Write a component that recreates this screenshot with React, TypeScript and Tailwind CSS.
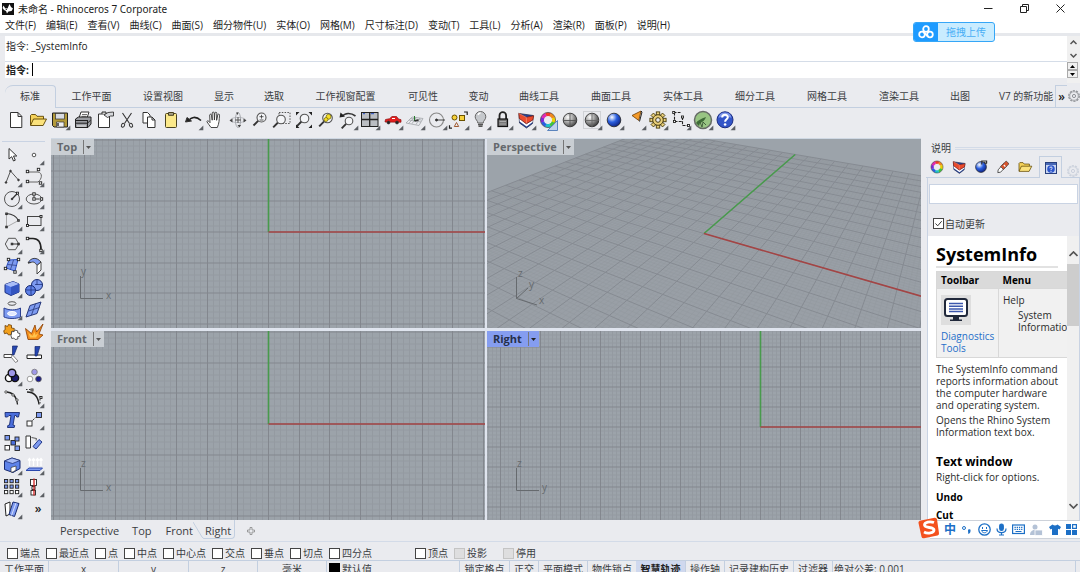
import React from "react";

type Glyph = { name: string; art: React.ReactNode; more?: boolean };

const K = "#333";
const B = "#2b4fc4";
const L = "#7d9af0";

const dot = (x: number, y: number, r = 1.2) => (
  <rect key={`${x}-${y}`} x={x - r} y={y - r} width={r * 2} height={r * 2} fill="#fff" stroke="#222" strokeWidth=".9" />
);
const sq = (x: number, y: number, fill: string, s = 4.5) => (
  <rect key={`s${x}-${y}`} x={x} y={y} width={s} height={s} fill={fill} stroke="#222" strokeWidth=".9" />
);

function Icon({ glyph, className }: { glyph: Glyph; className?: string }) {
  return (
    <button type="button" aria-label={glyph.name} className={className ?? "flex items-center justify-center"}>
      <svg width="22" height="22" viewBox="0 0 22 22" fill="none" stroke={K} className="shrink-0">
        {glyph.art}
        {glyph.more && <path d="M21.3 16.6v4.7h-4.7z" fill="#5c5f64" stroke="none" />}
      </svg>
    </button>
  );
}

const sphere = (a: string, b: string, id: string) => (
  <>
    <defs>
      <radialGradient id={id} cx=".35" cy=".3" r=".8">
        <stop offset="0" stopColor="#fff" />
        <stop offset=".45" stopColor={a} />
        <stop offset="1" stopColor={b} />
      </radialGradient>
    </defs>
    <circle cx="11" cy="11" r="6.8" fill={`url(#${id})`} stroke="#222" strokeWidth=".8" />
  </>
);

const wheel = (r: number, w: number) =>
  ["#f03a2a", "#f08a1c", "#ecd000", "#40c43a", "#20c0c8", "#2a5ce0", "#7a2ad8", "#e02ab0"].map((c, i) => {
    const a = ((i - 2.5) * Math.PI) / 4;
    const b = a + Math.PI / 4 + 0.04;
    return (
      <path
        key={c}
        d={`M${11 + r * Math.cos(a)} ${11 + r * Math.sin(a)}A${r} ${r} 0 0 1 ${11 + r * Math.cos(b)} ${11 + r * Math.sin(b)}`}
        stroke={c}
        strokeWidth={w}
      />
    );
  });

const layers = (
  <>
    <path d="M4 4.500l.5 9.500 7 5 6-4.500.8-8z" fill="#25439c" stroke="#1a2140" strokeWidth=".7" />
    <path d="M4.500 9.500l7 5.500 6.300-4-.2 2-6 4.500-7-5z" fill="#fff" stroke="none" />
    <path d="M3.800 4.200l7.500 4 7.400-1.400-.9 4.200-6.500 3.800-7-5.300z" fill="#ea4a2c" stroke="#7a2015" strokeWidth=".7" />
    <path d="M4 4.500l7.300 3.900.2 6" stroke="#f7a08a" strokeWidth=".6" />
  </>
);

const folder = (
  <>
    <path d="M3.500 16V6.500l1-1h4l1.500 1.800h6.500V10" fill="#f5d25a" stroke="#5b4300" strokeWidth=".9" />
    <path d="M3.500 16.500l3-6.500h13l-3.400 6.500z" fill="#fbe27c" stroke="#5b4300" strokeWidth=".9" />
  </>
);

const lens = (x: number, y: number, r: number, fill = "#f4f5f8") => (
  <>
    <path d={`M${x - r * 0.7} ${y + r * 0.7}L${x - r - 3.5} ${y + r + 3.5}`} strokeWidth="1.9" stroke="#333" />
    <circle cx={x} cy={y} r={r} fill={fill} stroke="#555" strokeWidth="1.1" />
  </>
);

const gearArt = (c: string, fill: string) =>
  Array.from({ length: 8 }, (_, i) => (
    <rect key={i} x="9.3" y="2.9" width="3.4" height="4" fill={fill} stroke={c} strokeWidth=".9" transform={`rotate(${i * 45} 11 11)`} />
  ));

const outlineGear = (c: string) => (
  <svg width="12" height="12" viewBox="0 0 12 12" fill="none" stroke={c}>
    <circle cx="6" cy="6" r="5.300" strokeDasharray="2.200 1.100" strokeWidth="1.100" />
    <circle cx="6" cy="6" r="4.300" strokeWidth=".7" />
    <circle cx="6" cy="6" r="1.600" strokeWidth=".9" />
  </svg>
);

const standardTools: Glyph[] = [
  { name: "新建", art: <path d="M5.5 3.5h7.5l3.8 3.8V18.5H5.5zM13 3.5v4h3.8" fill="#fff" strokeWidth="1" /> },
  { name: "打开", art: folder },
  { name: "保存", more: true, art: (
    <>
      <path d="M3.5 4h15v14h-13.500l-1.500-1.500z" fill="#b39a3a" stroke="#222" />
      <rect x="6.500" y="4.500" width="9" height="5.500" fill="#d9dce2" strokeWidth=".7" />
      <path d="M7.500 18v-5h7.500v5z" fill="#eee" strokeWidth=".7" /><path d="M9 14v3" strokeWidth="1.500" />
    </>) },
  { name: "打印", art: (
    <>
      <path d="M7 9l2-6h8l-2 6z" fill="#fff" /><path d="M10 5.500h5M9.500 7.300h5" strokeWidth=".7" />
      <path d="M3.500 10l3-2h12.500v7l-3 3.500H3.500z" fill="#9a9ca1" stroke="#222" />
      <path d="M4 11.500h11.500M4 14.200h11.500l3-3M15.500 11v7" stroke="#222" /><path d="M5 17h9" stroke="#eee" />
    </>) },
  { name: "属性", art: (
    <>
      <path d="M4.500 5h11v13.500h-11z" fill="#fff" /><path d="M8 5V3h4v2" fill="#ccc" />
      <path d="M10 6l4-2.500 5.500-.5v4h-3l-3 1.500z" fill="#d7d9dd" stroke="#222" strokeWidth=".8" />
    </>) },
  { name: "剪切", art: (
    <>
      <path d="M6.500 4l7 10.500M15.500 4l-7 10.500" strokeWidth="1.100" />
      <ellipse cx="7" cy="16.300" rx="1.500" ry="2" transform="rotate(30 7 16.300)" />
      <ellipse cx="15" cy="16.300" rx="1.500" ry="2" transform="rotate(-30 15 16.300)" />
    </>) },
  { name: "复制", art: <><path d="M5 3.500h4.500l2.500 2.500v8H5z" fill="#fff" /><path d="M9.500 8h4.500l3 3v7.500H9.500zM14 8v3h3" fill="#fff" /></> },
  { name: "粘贴", art: <><rect x="5.500" y="4.500" width="11" height="14" rx="1" fill="#fbe98a" stroke="#4a4320" /><path d="M8.500 6.300V3.500h5v2.800z" fill="#a8a28a" stroke="#4a4320" /></> },
  { name: "复原", more: true, art: <><path d="M6 12.500c3-5 8-5.500 13-1" strokeWidth="1.600" stroke="#222" /><path d="M3.500 13l1.500-4.500 4.500 3.500z" fill="#222" /></> },
  { name: "平移", art: <path d="M7 18.500c-1.500-2.200-3-4-4.200-6 .8-1.200 2-.5 3.200 1.200L5.700 6c.2-1.200 1.700-1 1.800.2l.7 5V4c.2-1.300 1.900-1.200 2 0l.2 7 .5-7c.2-1.200 1.900-1 1.900.3l-.2 7 1.200-5.500c.3-1.200 1.900-.8 1.700.4-.3 4.300-.3 8.300-2.200 12.300z" fill="#fff" strokeWidth=".9" /> },
  { name: "旋转视图", art: (
    <>
      <ellipse cx="11" cy="11" rx="7.500" ry="2.600" stroke="#b4b7bc" strokeWidth=".9" /><ellipse cx="11" cy="11" rx="2.600" ry="7.500" stroke="#a0a3a8" strokeWidth=".9" />
      <path d="M11 8v6M8 11h6" stroke="#555" />
      <path d="M2.500 11.500l3-2v4zM19.500 11.500l-3-2v4zM12.500 18.500l-2-2.500h3.500zM9 3.500l2.500 0-1 2.500z" fill="#444" stroke="none" />
    </>) },
  { name: "缩放", art: <>{lens(12.5, 8.500, 4.500)}<path d="M10.500 7.700h4M12.500 5.800v3.800M10.500 11h4" strokeWidth=".8" /></> },
  { name: "框选缩放", art: <><rect x="8" y="3.500" width="11" height="11" strokeDasharray="1.500 1.300" stroke="#555" />{lens(10, 10.500, 4.300)}</> },
  { name: "缩放至最大范围", art: (
    <>{lens(11.5, 9.500, 4.300)}<path d="M3 6.500V3h3.500zM15.500 3H19v3.500zM19 15.500V19h-3.500zM3 15.500V19h3.500z" fill="#222" stroke="none" /></>) },
  { name: "缩放选取物件", art: <>{lens(12.500, 9, 4.800)}<circle cx="13.500" cy="7.800" r="2.500" fill="#f5de2a" stroke="#6b6200" strokeWidth=".7" /><circle cx="11" cy="10.500" r="2" fill="#f5de2a" stroke="#6b6200" strokeWidth=".7" /></> },
  { name: "复原视图", more: true, art: <>{lens(12, 12, 3.800)}<path d="M5 7.500c3-4 9-4 13.500-.5" strokeWidth="1.600" /><path d="M2.500 8.500l1-5 4.500 4z" fill="#222" stroke="none" /></> },
  { name: "四个工作视窗", more: true, art: <><rect x="2.500" y="3.500" width="16.500" height="14" fill="#babdc2" stroke="#222" /><path d="M10.700 3.500v14M2.500 10.500H19" stroke="#222" strokeWidth="1.300" /><path d="M4 4.700h2M12 4.700h3" stroke={B} /></> },
  { name: "着色", more: true, art: (
    <>
      <path d="M3 13l.5-2.500 4-.8 2.500-2.200h4.500l2 2.500 2.500.7v2.500z" fill="#e31f1f" stroke="#8c0e0e" strokeWidth=".7" />
      <circle cx="6.500" cy="13.500" r="1.500" fill="#222" strokeWidth=".6" /><circle cx="15" cy="13.500" r="1.500" fill="#222" strokeWidth=".6" /><path d="M10 9.500h3" stroke="#fff" />
    </>) },
  { name: "工作平面", more: true, art: (
    <>
      <path d="M2 14l6-6 11 1.500-4 7zM5 11l12 2M6.500 9.500l11 1.500M8 14.700L12 8.500M4.500 14.500l6-6.200M12 15.500l4-6.500" stroke="#9a9da2" strokeWidth=".7" />
      <path d="M10.500 12V7" stroke="#257a2b" /><path d="M10.500 12l4-1" stroke="#333" strokeWidth="1.300" />
    </>) },
  { name: "圆", more: true, art: <><circle cx="10.500" cy="11" r="7" stroke="#888" strokeWidth="1.100" /><path d="M11 11h8" strokeWidth=".9" /><circle cx="10.500" cy="11" r="1" fill="#222" /></> },
  { name: "选取", more: true, art: (
    <>
      <circle cx="6.500" cy="8.500" r="2.500" fill="#f7d23a" stroke="#6b5200" /><rect x="11.500" y="6.500" width="5" height="5" fill="#f7d23a" stroke="#6b5200" />
      <path d="M8.500 13.500l2.200 4H6.300z" stroke="#a05a30" /><path d="M16 3h3.200v3M4 19.200H1.500v-3" stroke="#222" strokeWidth="1.200" />
    </>) },
  { name: "隐藏物件", more: true, art: (
    <>
      <path d="M7.800 14c0-2.500-2.600-3.200-2.600-6.200a5.300 5.300 0 0 1 10.600 0c0 3-2.600 3.700-2.600 6.200z" fill="#c5c8cc" stroke="#666" />
      <path d="M8 15.500h5M8.500 17.200h4" strokeWidth="1.500" stroke="#555" /><path d="M8 6c.5-1.500 1.500-2 2.500-2" stroke="#fff" strokeWidth="1.300" />
    </>) },
  { name: "锁定物件", more: true, art: <><path d="M7.500 10V6.500a3.300 3.300 0 0 1 6.600 0V10" strokeWidth="1.800" stroke="#222" /><rect x="6" y="10" width="9.500" height="7.500" fill="#777" stroke="#111" strokeWidth="1.200" /><path d="M7.500 12.500h6.500M7.500 15h6.500" stroke="#aaa" /></> },
  { name: "图层", more: true, art: layers },
  { name: "物件属性", more: false, art: <>{wheel(5.8, 3.4)}<circle cx="11" cy="11" r="7.600" stroke="#333" strokeWidth=".6" /><path d="M20.500 11.500v10h-10z" fill="#b7cdea" fillOpacity=".85" stroke="#5b84bd" /></> },
  { name: "着色模式", art: <>{sphere("#aaa", "#333", "sp1")}<path d="M11 4.300v13.500M4.300 11.500h13.500" stroke="#555" strokeWidth=".9" /></> },
  { name: "渲染模式", more: true, art: <><rect x="2.500" y="2.500" width="17" height="17" stroke="#b4b6ba" strokeDasharray="1 1" />{sphere("#999", "#2a2a2a", "sp2")}<path d="M11 4.300v13.500M4.300 11.500h13.500" stroke="#666" strokeWidth=".9" /></> },
  { name: "渲染", more: true, art: sphere("#2a5fe0", "#0a1870", "sp3") },
  { name: "灯光", more: true, art: <><path d="M7 6.500l9-4.500-2.200 9.500z" fill="#f39a2a" stroke="#6b3a00" strokeWidth=".8" /><path d="M16 2l1 1-2.500 9.500" stroke="#222" /></> },
  { name: "选项", more: true, art: <>{gearArt("#473c10", "#e9cf7a")}<circle cx="11" cy="11" r="5.300" fill="#e9cf7a" stroke="#473c10" /><circle cx="11" cy="11" r="2.300" fill="#eaebef" stroke="#473c10" /></> },
  { name: "尺寸标注", more: true, art: <><path d="M3.500 3.500h7M4.500 3.500v9M4.500 12.500h7.500M12.500 8v8.500M12.500 16.500h6" stroke="#222" strokeDasharray="3 1.200" strokeWidth="1.100" />{dot(3.700, 3.500, 1)}{dot(4.500, 12.500, 1)}{dot(12.500, 8, 1)}{dot(18.500, 16.500, 1)}</> },
  { name: "Grasshopper", more: true, art: <><circle cx="11" cy="11" r="8.500" fill="#98c583" stroke="#666b66" strokeWidth="1.500" /><path d="M4 14c2-3 5-4 10-6-1 3-3 5-6 6l-1 3z" fill="#3e6b38" stroke="none" /><path d="M8 13l2 5 1-5 3 3" stroke="#304c2d" strokeWidth=".8" /></> },
  { name: "说明", more: true, art: <><circle cx="11" cy="10.800" r="8" fill="#3355c8" stroke="#1b2c80" /><path d="M4.500 9a6.600 6.600 0 0 1 13 0c-4-2-9-2-13 0z" fill="#7d96ea" stroke="none" /><path d="M8.200 8.500c0-3.700 5.800-3.500 5.600-.2-.2 2-2.700 2-2.700 4.500" stroke="#fff" strokeWidth="2" /><circle cx="11.100" cy="15.500" r="1.300" fill="#fff" stroke="none" /></> },
];

const modelTools: Glyph[] = [
  { name: "选取物件", art: <path d="M8 4.500v10.500l2.700-2.300 1.800 4.300 1.800-.8-1.800-4.200h3.300z" fill="#fff" strokeWidth="1" /> },
  { name: "单点", more: true, art: <circle cx="11" cy="11" r="1.800" fill="#fff" stroke="#555" /> },
  { name: "多重直线", more: true, art: <><path d="M5 16.500L9.500 5l8 9" stroke="#555" /><circle cx="5" cy="16.500" r=".8" fill={K} /><circle cx="9.500" cy="5" r=".8" fill={K} /><circle cx="17.500" cy="14" r=".8" fill={K} /></> },
  { name: "曲线", more: true, art: <><path d="M5 6h10c5 1 4 7 0 10H5" stroke="#666" />{dot(4.500, 5.500)}{dot(15.500, 3.500)}{dot(4.500, 15.500)}{dot(17.500, 17)}</> },
  { name: "圆", more: true, art: <><circle cx="11" cy="11" r="7.500" stroke="#555" /><path d="M11 11l5.300-5.500" strokeWidth="1.300" />{dot(16.500, 5.200, 1)}<circle cx="11" cy="11" r=".8" fill={K} /></> },
  { name: "椭圆", more: true, art: <><ellipse cx="11" cy="11" rx="7.800" ry="5" stroke="#555" />{dot(11, 6)}{dot(11, 11)}{dot(18.500, 11)}<path d="M11 7.500v2M12.500 11h4" /></> },
  { name: "圆弧", more: true, art: <><path d="M5.500 3.500v13.500l12-6.500" stroke="#999" strokeWidth=".8" /><path d="M5.500 3.500c6 .5 10 3 12 7" strokeWidth="1.200" />{dot(5.500, 3.800, .8)}{dot(5.500, 17, .8)}{dot(17.500, 10.500, .8)}</> },
  { name: "矩形", more: true, art: <><rect x="4.500" y="6.500" width="13.500" height="9" stroke="#444" />{dot(4.500, 15.500, 1)}{dot(18, 6.500, 1)}</> },
  { name: "多边形", more: true, art: <><path d="M7.500 5.300h7l3.300 5.700-3.300 5.700h-7L4.300 11z" stroke="#555" /><path d="M11 11h6.500" />{dot(11, 11, .8)}{dot(17.500, 11, .8)}</> },
  { name: "曲线圆角", more: true, art: <><path d="M5 5.500h5c5 0 8 3 8 11" stroke="#222" strokeWidth="1.700" />{dot(4.500, 5.500)}{dot(18, 17.500)}</> },
  { name: "曲面", more: true, art: <><path d="M8 5l9-.5-3 11.500-9-3z" fill={L} stroke={B} /><path d="M12.500 5l-3 9.500M6.500 9.500l9.500 1" stroke="#26377a" strokeWidth=".7" />{dot(7.500, 4.500)}{dot(17.500, 4.500)}{dot(4.500, 13.500)}{dot(14, 17)}</> },
  { name: "放样", more: true, art: <><path d="M5 8c3-6 9-6 13-1l-4 3.500c-2-3.500-4-4-6-3z" fill={L} stroke={K} strokeWidth=".9" /><path d="M5 8l3-.7" strokeWidth=".9" /><path d="M14 10.500l4-3.500v8l-4 4z" fill="#fff" strokeWidth=".9" /></> },
  { name: "立方体", more: true, art: <><path d="M4 7.500l8-3 6 2.500v8l-8 3.500-6-3z" fill="#4b70e0" stroke="#1b2f80" /><path d="M4 7.500l6 2.500 8-3-6-2.500z" fill="#a8bcf7" stroke="none" /><path d="M10 10v8.500l8-3.500V7z" fill="#3354c0" stroke="none" /></> },
  { name: "球体", more: true, art: <><circle cx="14" cy="8" r="5.500" fill={L} stroke="#172a70" /><circle cx="7.500" cy="13.500" r="5" fill="#5f82ea" stroke="#172a70" /><path d="M2.800 13h9.500M8 8.500v10M14 3v5M12 7.500h7" stroke="#172a70" strokeWidth=".7" /></> },
  { name: "挤出", more: true, art: <><ellipse cx="11" cy="4.500" rx="4" ry="1.800" stroke="#555" /><path d="M3 9c5 2.500 12 2.500 16.500 0v9c-5 2-12 2-16.500 0z" fill={L} stroke="#2b3f90" /><ellipse cx="11" cy="14.500" rx="4.500" ry="2" fill="#dfe7ff" stroke="#fff" /></> },
  { name: "网格", more: true, art: <><path d="M7 6.500l11-3.500-4 11.500L3 18z" fill={L} stroke="#26377a" /><path d="M12.500 4.700L8.500 16M5.500 12l11-3.500" stroke="#26377a" strokeWidth=".8" /></> },
  { name: "组合", art: <><path d="M4 4.500l2.500 1 1-2 3 .8v2.700l2.800.5-.3 3-2.500.3.300 2.700-3.300.5-1.500-2-2.500.7-.8-3 1.500-1z" fill="#f2a01c" stroke="#6b3a00" strokeWidth=".8" /><path d="M11 10l2 .8 1-1.800 2.600.8.200 2.200 2.200.5-.3 2.800-2 .4.200 2.300-2.800.5-1.300-1.500-2 .5-.8-2.800z" fill="#fff" strokeWidth=".8" /></> },
  { name: "炸开", art: <><path d="M5 18.500L2.500 7.500l6 5L12 4l1.500 7L20 3l-4 10 4 1-5 4.500z" fill="#f5901e" stroke="#8a3c00" strokeWidth=".8" /><path d="M7 16.500l-1.500-4.500 4 3 2-4 1 3 3-2-2.500 4.500z" fill="#ffc34d" stroke="none" /></> },
  { name: "修剪", art: <><path d="M3 11.500h8v3H3z" fill="#fff" strokeWidth=".9" /><path d="M11.500 3h5l-3.500 9h-1.500z" fill="#2546b0" stroke="#14266b" strokeWidth=".7" /><path d="M12 12.500l5 5.500-2.500 1.500-4-5" fill="#fff" stroke="#777" strokeWidth=".9" /></> },
  { name: "分割", art: <><path d="M4 12h14.500v3.500H4z" fill="#fff" stroke="#222" /><path d="M12 3.500h5l-3 9.500h-2z" fill="#2546b0" stroke="#14266b" strokeWidth=".7" /></> },
  { name: "群组", more: true, art: <><circle cx="8" cy="13" r="3.600" fill="#fff" stroke="#111" strokeWidth="1.400" /><circle cx="14" cy="13" r="3.600" fill="#1b1b6b" stroke="#111" strokeWidth="1.400" /><circle cx="11" cy="8" r="3.800" fill="#9e97e8" stroke="#111" strokeWidth="1.400" /></> },
  { name: "解散群组", art: <><circle cx="11.500" cy="7" r="2.800" fill="#9e97e8" stroke="#777" strokeWidth=".8" /><circle cx="7" cy="14" r="2.800" fill="#fff" stroke="#888" strokeWidth=".8" /><circle cx="15.500" cy="14" r="2.800" fill="#1b1b8b" stroke="#555" strokeWidth=".8" /></> },
  { name: "显示控制点", art: <><path d="M4.500 5c7 0 11 4 12 12.500" stroke="#222" strokeWidth="1.300" /><circle cx="5" cy="5" r="1.200" fill="#fff" strokeWidth=".8" /><circle cx="12" cy="8" r="1.200" fill="#fff" strokeWidth=".8" /><circle cx="16" cy="13" r="1.200" fill="#fff" strokeWidth=".8" /></> },
  { name: "编辑点", more: true, art: <><path d="M4 5c7 0 11 4 12 12.500" stroke="#222" strokeWidth="1.300" /><path d="M3 2.500h6M17 9v8" strokeDasharray="1.500 1.500" />{dot(9, 3, 1)}{dot(18, 10.500, 1)}</> },
  { name: "文字", art: <path d="M4 3.500h14.500l-1 4.500h-1.800l-.5-1.500h-1.500l-1.700 9.500 1.700.5-.5 2H6.500l.3-2 1.700-.5L10 6.500H8L6.500 8H4.300z" fill="#4a6edc" stroke="#172a70" strokeWidth=".9" /> },
  { name: "移动", more: true, art: <>{sq(4, 12, "#fff", 5)}{sq(13.500, 3.500, L, 5)}<path d="M9.500 11.500l3-3" strokeDasharray="2 1" /></> },
  { name: "阵列复制", art: <>{sq(4, 3.500, L, 4.500)}{sq(10, 8.500, "#4a6edc", 4.500)}{sq(14, 5, L, 4)}{sq(4, 13.500, "#fff", 4.500)}{sq(14, 14, L, 4.500)}</> },
  { name: "旋转", art: <><path d="M3 4h4.500v12H3z" fill="#fff" /><path d="M10 14.500l6-7 3 2.500-6 7z" fill={L} stroke="#22388a" /><path d="M8.500 5.500l5 1-.5 2" stroke="#333" strokeWidth=".8" /></> },
  { name: "布尔运算", more: true, art: <><path d="M3.500 7l7.500-3 8 2.500v8l-7 4-8.500-3z" fill="#5e83ea" stroke="#172a70" /><path d="M3.500 7l8 2.500 7.500-3L11 4z" fill="#a8bcf7" stroke="#172a70" strokeWidth=".7" /><path d="M10 13.500l5-1.500v4l-3 2h-2z" fill="#fff" strokeWidth=".7" /></> },
  { name: "投影", more: true, art: <><path d="M3 16.500h14l2.500-2.500H6z" fill={L} stroke="#2a47ad" /><path d="M6.500 12V5M10.500 12V5M14.500 12V5M18 12V5M5 6.500l1.500-2 1.500 2M9 6.500l1.500-2 1.500 2M13 6.500l1.500-2 1.500 2M16.500 6.500l1.500-2 1.500 2" stroke="#fff" strokeWidth="1.300" /></> },
  { name: "阵列", more: true, art: <>{[3.500, 9, 14.500].map((y) => [3.500, 9, 14.500].map((x) => sq(x, y, y > 14 ? "#fff" : L, 3.200)))}</> },
  { name: "对齐", more: true, art: <>{sq(7.500, 3.500, "#fff", 6)}{sq(9, 10.500, "#fff", 3)}{sq(8, 14.500, "#fff", 4.500)}<path d="M11 2.500v17" stroke="#d02020" strokeWidth="1.300" /></> },
  { name: "弯曲", more: true, art: <><path d="M4 6l5-2v12l-4 2z" fill="#fff" stroke="#222" /><path d="M12 4l6 1.500-4.500 13L8 16.500z" fill={L} stroke="#172a70" /><path d="M15 5l-4.500 12.500" stroke="#d5defc" /></> },
];

const menus = ["文件(F)", "编辑(E)", "查看(V)", "曲线(C)", "曲面(S)", "细分物件(U)", "实体(O)", "网格(M)", "尺寸标注(D)", "变动(T)", "工具(L)", "分析(A)", "渲染(R)", "面板(P)", "说明(H)"];

const toolTabs: [string, string][] = [
  ["工作平面", "w-[71px]"], ["设置视图", "w-[72px]"], ["显示", "w-[50px]"], ["选取", "w-[50px]"],
  ["工作视窗配置", "w-[93px]"], ["可见性", "w-[62px]"], ["变动", "w-[49px]"], ["曲线工具", "w-[72px]"],
  ["曲面工具", "w-[72px]"], ["实体工具", "w-[72px]"], ["细分工具", "w-[72px]"], ["网格工具", "w-[72px]"],
  ["渲染工具", "w-[72px]"], ["出图", "w-[50px]"],
];

const MAJOR = "#83878e";
const MINOR = "#949aa1";
const GREEN = "#489a4c";
const RED = "#a34545";

function PlanGrid({ step, dx = 0, dy = 0 }: { step: number; dx?: number; dy?: number }) {
  const ext = 14 * step * 3;
  const sub = step / 5;
  const lines: React.ReactNode[] = [];
  for (let pass = 0; pass < 2; pass++) {
    for (let i = -210; i <= 210; i++) {
      const major = i % 5 === 0;
      if (major !== (pass === 1)) continue;
      const p = Math.round(i * sub) + 0.5;
      const c = major ? MAJOR : MINOR;
      lines.push(<path key={`${pass}-${i}`} d={`M${p} ${-ext}V${ext}M${-ext} ${p}H${ext}`} stroke={c} strokeWidth="1" />);
    }
  }
  return (
    <svg x="50%" y="50%" overflow="visible">
      <g transform={`translate(${dx} ${dy})`}>
        {lines}
        <path d="M.5 .5V-900" stroke={GREEN} strokeWidth="1.600" />
        <path d="M.5 .5H1800" stroke={RED} strokeWidth="1.600" />
      </g>
    </svg>
  );
}

function project(x: number, y: number): [number, number] {
  const c = Math.cos(Math.PI / 6);
  const u = x * c + y * 0.5;
  const w = y * c - x * 0.5;
  const depth = 1 + w * c;
  return [(396 * u) / depth, (-396 * w * 0.5) / depth];
}

function PerspectiveGrid() {
  const n = 0.704;
  const seg = (x1: number, y1: number, x2: number, y2: number) => {
    const a = project(x1, y1);
    const b = project(x2, y2);
    return `M${a[0].toFixed(1)} ${a[1].toFixed(1)}L${b[0].toFixed(1)} ${b[1].toFixed(1)}`;
  };
  let minor = "";
  let major = "";
  for (let i = -70; i <= 70; i++) {
    const t = (i / 70) * n;
    const d = seg(t, -n, t, n) + seg(-n, t, n, t);
    if (i % 5 === 0) major += d;
    else minor += d;
  }
  const corners = [project(-n, n), project(n, n), project(n, -n), project(-n, -n)];
  return (
    <svg x="50%" y="50%" overflow="visible">
      <polygon points={corners.map((p) => p.join(",")).join(" ")} fill="#999fa6" />
      <path d={minor} stroke="#92989f" strokeWidth=".5" fill="none" />
      <path d={major} stroke="#868b92" strokeWidth="1" fill="none" />
      <path d={seg(0, 0, 0, n)} stroke={GREEN} strokeWidth="1.600" />
      <path d={seg(0, 0, n, 0)} stroke={RED} strokeWidth="1.600" />
    </svg>
  );
}

function Viewport({ name, active, grid, axes }: { name: string; active?: boolean; grid: React.ReactNode; axes: [string, string] | null }) {
  return (
    <section aria-label={name} className="relative min-h-0 min-w-0 overflow-hidden bg-[#9ca3aa]">
      <svg className="absolute inset-0 h-full w-full">
        {grid}
      </svg>
      <svg width="40" height="44" viewBox="0 0 40 44" className="absolute bottom-[22px] left-6" fill="#666a6e" fontFamily="Open Sans" fontSize="10">
        {axes ? (
          <>
            <path d="M5.500 14V36.500H28" fill="none" stroke="#666a6e" />
            <text x="6" y="13">{axes[1]}</text>
            <text x="31" y="37">{axes[0]}</text>
          </>
        ) : (
          <>
            <path d="M5.500 15V36.500L26 43M5.500 36.500L17 26" fill="none" stroke="#666a6e" />
            <text x="7" y="15">z</text>
            <text x="18" y="26">y</text>
            <text x="28" y="42">x</text>
          </>
        )}
      </svg>
      <button
        type="button"
        className={
          active
            ? "relative flex h-4 items-center gap-[6px] bg-[#859df0] pl-[6px] pr-[3px] text-[11px] font-bold text-[#26304a]"
            : "relative flex h-4 items-center gap-[6px] bg-[#c9ced3] pl-[6px] pr-[3px] text-[11px] font-bold text-[#64686c]"
        }
      >
        <span>{name}</span>
        <span className="flex h-[14px] items-center border-l border-[#777] pl-[2px]">
          <svg width="5" height="3" viewBox="0 0 5 3"><path d="M0 0h5L2.500 3z" fill={active ? "#222" : "#555"} /></svg>
        </span>
      </button>
    </section>
  );
}

function Check({ label, off }: { label: string; off?: boolean }) {
  return (
    <label className="flex items-center gap-[2px] whitespace-nowrap">
      <input
        type="checkbox"
        disabled={off}
        className={off ? "m-0 h-[11px] w-[11px] appearance-none border border-[#c4c4c4] bg-[#dededf]" : "m-0 h-[11px] w-[11px] appearance-none border border-[#444] bg-white"}
      />
      {label}
    </label>
  );
}

const small = (node: React.ReactNode) => <svg width="16" height="16" viewBox="1 1 20 20" fill="none" stroke={K}>{node}</svg>;

const panelTabs: [string, React.ReactNode][] = [
  ["属性", small(<>{wheel(5.8, 3.4)}<circle cx="11" cy="11" r="7.600" stroke="#333" strokeWidth=".6" /></>)],
  ["图层", small(layers)],
  ["渲染", small(<>{sphere("#2a5fe0", "#0a1870", "sp4")}<path d="M12 8V3.500h6v3M14.500 5l3.500 2" strokeWidth="1.500" /></>)],
  ["材质", small(<><path d="M5 14.500l7-8 3.500 3-7.500 8-3.500.5z" fill="#fff" /><path d="M8 10.500l7-7 3.500 3.500-7 7z" fill="#d8542c" strokeWidth=".8" /><path d="M12 8.500l2 2" stroke="#fff" strokeWidth="1.500" /></>)],
  ["图库", small(folder)],
];

const tray = "shrink-0 text-[#1c6fc6]";

export default function App() {
  return (
    <div className="relative flex h-screen min-h-[480px] flex-col overflow-hidden bg-[#eaebef] font-['Open_Sans','Noto_Sans_CJK_SC',sans-serif] text-[10px] leading-3 text-[#3a3d42]">
      <header className="shrink-0 bg-white text-[#1d1d1d]">
        <div className="flex h-[17px] items-center justify-between pl-[2px]">
          <h1 className="flex items-center gap-1 font-['Noto_Sans','Noto_Sans_CJK_SC',sans-serif]">
            <svg width="12" height="12" viewBox="0 0 12 12">
              <rect width="12" height="12" fill="#111" />
              <path d="M1.500 2.500l1.500 2.500 2.500.5 2-4.500 1.500 3 2 1.500-1.500 2.500-3 .5-1.500 2-1-2.500-2-1-1.500-2z" fill="#fff" />
              <path d="M3.500 6l1.500.5" stroke="#111" />
            </svg>
            未命名 - Rhinoceros 7 Corporate
          </h1>
          <div className="flex items-center pr-[2px]">
            <button type="button" aria-label="最小化" className="flex w-9 justify-center"><svg width="9" height="9" viewBox="0 0 9 9"><path d="M0 4.500h8.500" stroke="#222" /></svg></button>
            <button type="button" aria-label="还原" className="flex w-9 justify-center"><svg width="9" height="9" viewBox="0 0 9 9" fill="none" stroke="#222"><path d="M.5 2.500h6v6h-6zM2.500 2.500v-2h6v6h-2" /></svg></button>
            <button type="button" aria-label="关闭" className="flex w-9 justify-center"><svg width="9" height="9" viewBox="0 0 9 9"><path d="M.5 .5l8 8M8.500 .5l-8 8" stroke="#222" /></svg></button>
          </div>
        </div>
        <nav className="flex h-4 items-center gap-[10px] whitespace-nowrap pl-[5px]">
          {menus.map((m) => <button key={m} type="button">{m}</button>)}
        </nav>
      </header>

      <section className="flex h-[50px] shrink-0 border-t-[3px] border-[#e6e8ec] pl-[5px]">
        <div className="flex min-w-0 flex-1 flex-col text-[#222]">
          <output className="flex h-[26px] items-start border-b border-[#d5dde8] bg-white pl-[1px] pt-1">指令: _SystemInfo</output>
          <label className="flex h-4 items-center gap-[3px] bg-white pb-px pl-[1px] font-bold">
            指令:
            <input autoComplete="off" className="h-[13px] min-w-0 flex-1 border-l border-black bg-transparent font-normal outline-none" />
          </label>
        </div>
        <div className="flex w-[13px] flex-col bg-[#f0f0f0]">
          <button type="button" aria-label="向上" className="flex h-[13px] items-center justify-center"><svg width="7" height="5" viewBox="0 0 7 5" fill="none"><path d="M.5 4l3-3 3 3" stroke="#555" strokeWidth="1.500" /></svg></button>
          <button type="button" aria-label="向下" className="flex h-[13px] items-center justify-center"><svg width="7" height="5" viewBox="0 0 7 5" fill="none"><path d="M.5 1l3 3 3-3" stroke="#555" strokeWidth="1.500" /></svg></button>
          <button type="button" aria-label="上一个" className="flex h-2 w-[11px] items-center justify-center border border-[#aaa]"><svg width="5" height="3" viewBox="0 0 5 3"><path d="M0 3h5L2.500 0z" /></svg></button>
          <button type="button" aria-label="下一个" className="flex h-2 w-[11px] items-center justify-center border border-[#aaa]"><svg width="5" height="3" viewBox="0 0 5 3"><path d="M0 0h5L2.500 3z" /></svg></button>
        </div>
      </section>

      <section className="flex shrink-0 flex-col pt-[2px]">
        <div className="flex h-[23px] items-stretch pl-[5px]">
          <button type="button" className="w-[51px] shrink-0 rounded-tl-lg rounded-tr-sm border-r border-t border-[#c3cfe0] pb-[2px]">标准</button>
          <div className="flex min-w-0 flex-1 overflow-hidden whitespace-nowrap border-b border-[#c3cfe0]">
            {toolTabs.map(([t, w]) => <button key={t} type="button" className={`shrink-0 ${w}`}>{t}</button>)}
            <button type="button" className="shrink-0 pl-[14px]">V7 的新功能</button>
          </div>
          <button type="button" aria-label="更多" className="w-3 shrink-0 border-b border-l border-t border-[#c3cfe0] text-xs font-semibold leading-none text-[#222]">»</button>
          <button type="button" aria-label="设置" className="flex w-[13px] shrink-0 items-center justify-center border-b border-[#c3cfe0]">{outlineGear("#85888d")}</button>
        </div>
        <div className="grid h-[30px] max-w-[736px] grid-cols-[repeat(33,minmax(0,1fr))] items-start pl-[5px] pt-px">
          {standardTools.map((g) => <Icon key={g.name} glyph={g} />)}
        </div>
      </section>

      <main className="flex min-h-0 flex-1">
        <aside className="flex w-[51px] shrink-0 flex-col pr-[6px] pt-[3px]">
          <div className="ml-[2px] h-[3px] shrink-0 border-t border-[#c9d3e3]" />
          <div className="ml-px grid min-h-0 flex-1 grid-cols-2 grid-rows-[repeat(17,minmax(0,1fr))]">
            {modelTools.map((g) => <Icon key={g.name} glyph={g} />)}
            <button type="button" aria-label="更多工具" className="pl-2 text-xs font-semibold leading-none text-[#222]">»</button>
          </div>
        </aside>

        <div className="grid min-w-0 flex-1 grid-cols-2 grid-rows-2 gap-x-[2px] gap-y-[3px] border-t border-[#cfd8e3] bg-[#dfe4ee]">
          <Viewport name="Top" axes={["x", "y"]} grid={<PlanGrid step={30.7} dy={-2} />} />
          <Viewport name="Perspective" axes={null} grid={<PerspectiveGrid />} />
          <Viewport name="Front" axes={["x", "z"]} grid={<PlanGrid step={30.7} dy={-2} />} />
          <Viewport name="Right" active axes={["y", "z"]} grid={<PlanGrid step={20} dx={56} dy={1} />} />
        </div>

        <aside className="flex w-[159px] shrink-0 flex-col pl-[5px]">
          <div className="flex h-[18px] shrink-0 items-center gap-1 pl-[5px] pt-[2px]">
            <h2>说明</h2>
            <div className="h-[3px] flex-1 border-y border-[#d3dbe8]" />
          </div>
          <div className="flex h-[22px] shrink-0">
            {panelTabs.map(([n, art]) => (
              <button key={n} type="button" aria-label={n} className="flex w-[22px] shrink-0 items-center justify-center border-b border-[#c3cfe0]">{art}</button>
            ))}
            <div className="w-[3px] shrink-0 border-b border-[#c3cfe0]" />
            <button type="button" aria-label="说明" className="flex w-[23px] shrink-0 items-center justify-center border-x border-t border-[#c3cfe0]">
              <svg width="12" height="12" viewBox="0 0 12 12"><rect x=".5" y=".5" width="11" height="11" fill="#c9d6f2" stroke="#29417e" /><rect x="1" y="1" width="10" height="2" fill="#4767b5" /><circle cx="6" cy="7" r="3.800" fill="#2d56cc" /><path d="M4.800 6.200c0-1.600 2.600-1.500 2.400 0-.2.800-1.200.8-1.200 2M6 9v.8" stroke="#fff" fill="none" /></svg>
            </button>
            <button type="button" aria-label="面板选项" className="flex flex-1 items-end justify-end border-b border-[#c3cfe0] pr-px">{outlineGear("#c6cdd9")}</button>
          </div>
          <div className="ml-px flex min-h-0 flex-1 flex-col border-x border-[#c9d3e3] pt-[6px]">
            <input aria-label="搜索说明" className="mx-px h-5 shrink-0 border border-[#c9d3e3] bg-white px-1 outline-none" />
            <label className="mt-3 flex h-[15px] shrink-0 items-center gap-px pl-[5px]">
              <span className="grid h-[11px] w-[11px]">
                <input type="checkbox" defaultChecked className="col-start-1 row-start-1 m-0 h-[11px] w-[11px] appearance-none border border-[#444] bg-white" />
                <svg viewBox="0 0 11 11" className="pointer-events-none col-start-1 row-start-1" fill="none"><path d="M2.500 5.500l2.200 2.300 4-4.600" stroke="#333" /></svg>
              </span>
              自动更新
            </label>
            <div className="mt-[5px] flex min-h-0 flex-1">
              <article className="min-w-0 flex-1 overflow-hidden bg-white pl-2 text-[#2b2b2b]">
                <h1 className="mr-[9px] mt-[7px] border-b-2 border-[#e2e2e2] pb-px text-[18px] font-bold leading-[22px] text-black">SystemInfo</h1>
                <table className="mt-[3px] w-[144px] border-collapse border border-[#d8d8d8] bg-[#f1f1f1] text-left align-top">
                  <thead className="h-[17px] bg-[#dadada] text-black">
                    <tr><th className="w-[62px] pl-1 font-bold">Toolbar</th><th className="pl-1 font-bold">Menu</th></tr>
                  </thead>
                  <tbody>
                    <tr>
                      <td className="border border-[#d8d8d8] pb-[3px] pl-1 pt-[6px] align-top">
                        <div className="mb-[5px] flex h-[30px] w-[30px] items-center justify-center bg-[#dedede]">
                          <svg width="24" height="24" viewBox="0 0 24 24"><rect x="1" y="1" width="22" height="17" rx="2.500" fill="#fff" stroke="#20283a" strokeWidth="2" /><path d="M5 5.500h14M5 8.200h14M5 10.900h14M5 13.600h14" stroke="#3d58ad" strokeWidth="1.500" /><path d="M9 19h6v2.500h3V23H6v-1.500h3z" fill="#20283a" /></svg>
                        </div>
                        <a href="#diagnostics" className="text-[#1f6fc9]">Diagnostics<br />Tools</a>
                      </td>
                      <td className="border border-[#d8d8d8] pl-1 pt-[5px] align-top">
                        <p>Help</p>
                        <p className="mt-[3px] pl-[15px]">System<br />Information</p>
                      </td>
                    </tr>
                  </tbody>
                </table>
                <p className="mt-[5px] whitespace-nowrap">The SystemInfo command<br />reports information about<br />the computer hardware<br />and operating system.</p>
                <p className="mt-[3px] whitespace-nowrap">Opens the Rhino System<br />Information text box.</p>
                <h2 className="mt-4 text-xs font-bold leading-4 text-black">Text window</h2>
                <p className="mt-px whitespace-nowrap">Right-click for options.</p>
                <h3 className="mt-2 font-bold text-black">Undo</h3>
                <h3 className="mt-[6px] font-bold text-black">Cut</h3>
              </article>
              <div className="flex w-3 shrink-0 flex-col items-center bg-[#f0f0f0]">
                <button type="button" aria-label="向上滚动" className="flex h-7 items-center pt-2"><svg width="9" height="6" viewBox="0 0 9 6" fill="none"><path d="M.5 5l4-4 4 4" stroke="#555" strokeWidth="1.700" /></svg></button>
                <div className="h-[62px] w-full bg-[#cdcdcd]" />
                <button type="button" aria-label="向下滚动" className="mt-auto flex h-7 items-center"><svg width="9" height="6" viewBox="0 0 9 6" fill="none"><path d="M.5 1l4 4 4-4" stroke="#555" strokeWidth="1.700" /></svg></button>
              </div>
            </div>
          </div>
        </aside>
      </main>

      <footer className="shrink-0">
        <div className="flex h-[22px] items-stretch border-b border-[#d3dbe8] pl-[53px] text-[11px]">
          <button type="button" className="px-[7px]">Perspective</button>
          <button type="button" className="px-[6px]">Top</button>
          <button type="button" className="pl-[8px]">Front</button>
          <svg width="11" height="19" viewBox="0 0 11 19" fill="none"><path d="M0 2l9 15q1 1.500 2 1.500" stroke="#c3cfe0" /></svg>
          <button type="button" className="mb-[2px] rounded-br border-b border-r border-[#c3cfe0] pl-px pr-[3px] pt-[3px]">Right</button>
          <button type="button" aria-label="新增工作视窗" className="flex items-center pl-[12px]"><svg width="8" height="8" viewBox="0 0 8 8" fill="none"><path d="M3 .5h2V3h2.500v2H5v2.500H3V5H.5V3H3z" stroke="#888" strokeWidth=".8" /></svg></button>
        </div>
        <div className="flex h-[18px] items-center gap-[6px] pl-[7px] pt-1">
          {["端点", "最近点", "点", "中点", "中心点", "交点", "垂点", "切点", "四分点"].map((s) => <Check key={s} label={s} />)}
          <div className="ml-[37px] flex h-[12px] items-start gap-[6px] overflow-hidden">
            <Check label="顶点" />
            <Check label="投影" off />
            <span className="w-1" />
            <Check label="停用" off />
          </div>
        </div>
        <div className="flex h-3 items-start overflow-hidden whitespace-nowrap border-t border-[#c3cfe0] text-center leading-[17px]">
          <button type="button" className="w-12 shrink-0">工作平面</button>
          <span className="w-[70px] shrink-0 border-l border-[#c3cfe0]">x</span>
          <span className="w-[70px] shrink-0 border-l border-[#c3cfe0]">y</span>
          <span className="w-[69px] shrink-0 border-l border-[#c3cfe0]">z</span>
          <button type="button" className="w-[69px] shrink-0 border-l border-[#c3cfe0]">毫米</button>
          <button type="button" className="flex w-[133px] shrink-0 gap-[2px] border-l border-[#c3cfe0] pl-[2px]"><span className="mt-[2px] h-[11px] w-[11px] bg-black" />默认值</button>
          <button type="button" className="w-[50px] shrink-0 border-l border-[#c3cfe0]">锁定格点</button>
          <button type="button" className="w-[29px] shrink-0 border-l border-[#c3cfe0]">正交</button>
          <button type="button" className="w-[49px] shrink-0 border-l border-[#c3cfe0]">平面模式</button>
          <button type="button" className="w-[49px] shrink-0 border-l border-[#c3cfe0]">物件锁点</button>
          <button type="button" className="w-[49px] shrink-0 bg-[#cfd8ee] font-bold text-[#222]">智慧轨迹</button>
          <button type="button" className="w-[39px] shrink-0 border-l border-[#c3cfe0]">操作轴</button>
          <button type="button" className="w-[69px] shrink-0 border-l border-[#c3cfe0]">记录建构历史</button>
          <button type="button" className="w-[39px] shrink-0 border-l border-[#c3cfe0]">过滤器</button>
          <span className="mr-1 flex-1 border-x border-[#c3cfe0] pl-px text-left">绝对公差: 0.001</span>
        </div>
      </footer>

      <button type="button" className="absolute right-[85px] top-[22px] flex h-5 w-[82px] items-stretch overflow-hidden rounded-[3px] border border-[#35a6f7] bg-[#c9ecff] text-[#48aef5]">
        <span className="flex w-6 items-center justify-center bg-[#1e9bff]">
          <svg width="16" height="14" viewBox="0 0 16 14" fill="none" stroke="#fff" strokeWidth="1.800"><circle cx="8" cy="4" r="2.800" /><circle cx="4" cy="9.500" r="2.800" /><circle cx="12" cy="9.500" r="2.800" /><path d="M6 7.500l4 4" /></svg>
        </span>
        <span className="flex flex-1 items-center justify-center">拖拽上传</span>
      </button>

      <div className="absolute bottom-[33px] right-0 flex h-[19px] w-[150px] items-center justify-between border-y border-[#cdd2da] bg-white pl-[14px] pr-[3px]">
        <svg width="23" height="22" viewBox="0 0 23 22" className="absolute -left-[13px] -top-[4px]"><path d="M4 3.500L17.500 .8q2-.3 2.500 1.500l2 14q.2 2-1.500 2.300L7 21.300q-2 .3-2.500-1.500L1.500 6q-.3-2 2.500-2.500z" fill="#f4511e" /><path d="M17 5.500c-4-1.500-9.500-.5-9.500 2.500 0 3.500 9.500 1.500 9.500 5 0 3-6.500 4-10 2" fill="none" stroke="#fff" strokeWidth="2.800" /></svg>
        <button type="button" className="text-[12px] font-bold text-[#1c6fc6]">中</button>
        <svg width="11" height="11" viewBox="0 0 11 11" className={tray}><circle cx="3" cy="4" r="1.500" fill="none" stroke="currentColor" /><path d="M7 6.500a1.300 1.300 0 1 1 2.500.5c0 1.500-.8 2.500-2.200 3" fill="currentColor" /></svg>
        <svg width="13" height="13" viewBox="0 0 13 13" className={tray} fill="none" stroke="currentColor"><circle cx="6.500" cy="6.500" r="5.700" strokeWidth="1.300" /><path d="M4.500 4v2M8.500 4v2M3.500 7.500c1 3 5 3 6 0z" /></svg>
        <svg width="11" height="13" viewBox="0 0 11 13" className={tray} fill="none" stroke="currentColor" strokeWidth="1.200"><rect x="3.700" y="1" width="3.600" height="6.500" rx="1.800" fill="currentColor" /><path d="M1 5.500c0 5.500 9 5.500 9 0M5.500 9.500V12M3 12h5" /></svg>
        <svg width="13" height="11" viewBox="0 0 13 11" className={tray} fill="none" stroke="currentColor"><rect x=".6" y="1" width="11.800" height="8.500" strokeWidth="1.200" /><path d="M2.500 3.300h8M2.500 5.300h8" strokeDasharray="1.300 .9" strokeWidth="1.200" /><path d="M3.500 7.500h6" /></svg>
        <svg width="13" height="12" viewBox="0 0 13 12" className="shrink-0 text-[#b4c2d6]" fill="currentColor"><circle cx="5" cy="3" r="2.500" /><path d="M0 11c0-6 7-6 8-4v4z" /><rect x="5" y="6" width="7.500" height="5.500" stroke="#fff" strokeWidth=".8" /></svg>
        <svg width="12" height="11" viewBox="0 0 12 11" className={tray} fill="currentColor"><path d="M3.500 .5q2.500 2 5 0L12 3l-1.500 2.500-1.500-.7V11H3V4.800l-1.500.7L0 3z" /></svg>
        <svg width="11" height="11" viewBox="0 0 11 11" className={tray} fill="currentColor"><path d="M0 0h5v5H0zM0 6h5v5H0zM6 6h5v5H6z" /><path d="M6.600 .6h3.800v3.800H6.600z" fill="none" stroke="currentColor" strokeWidth="1.200" /></svg>
      </div>
    </div>
  );
}
